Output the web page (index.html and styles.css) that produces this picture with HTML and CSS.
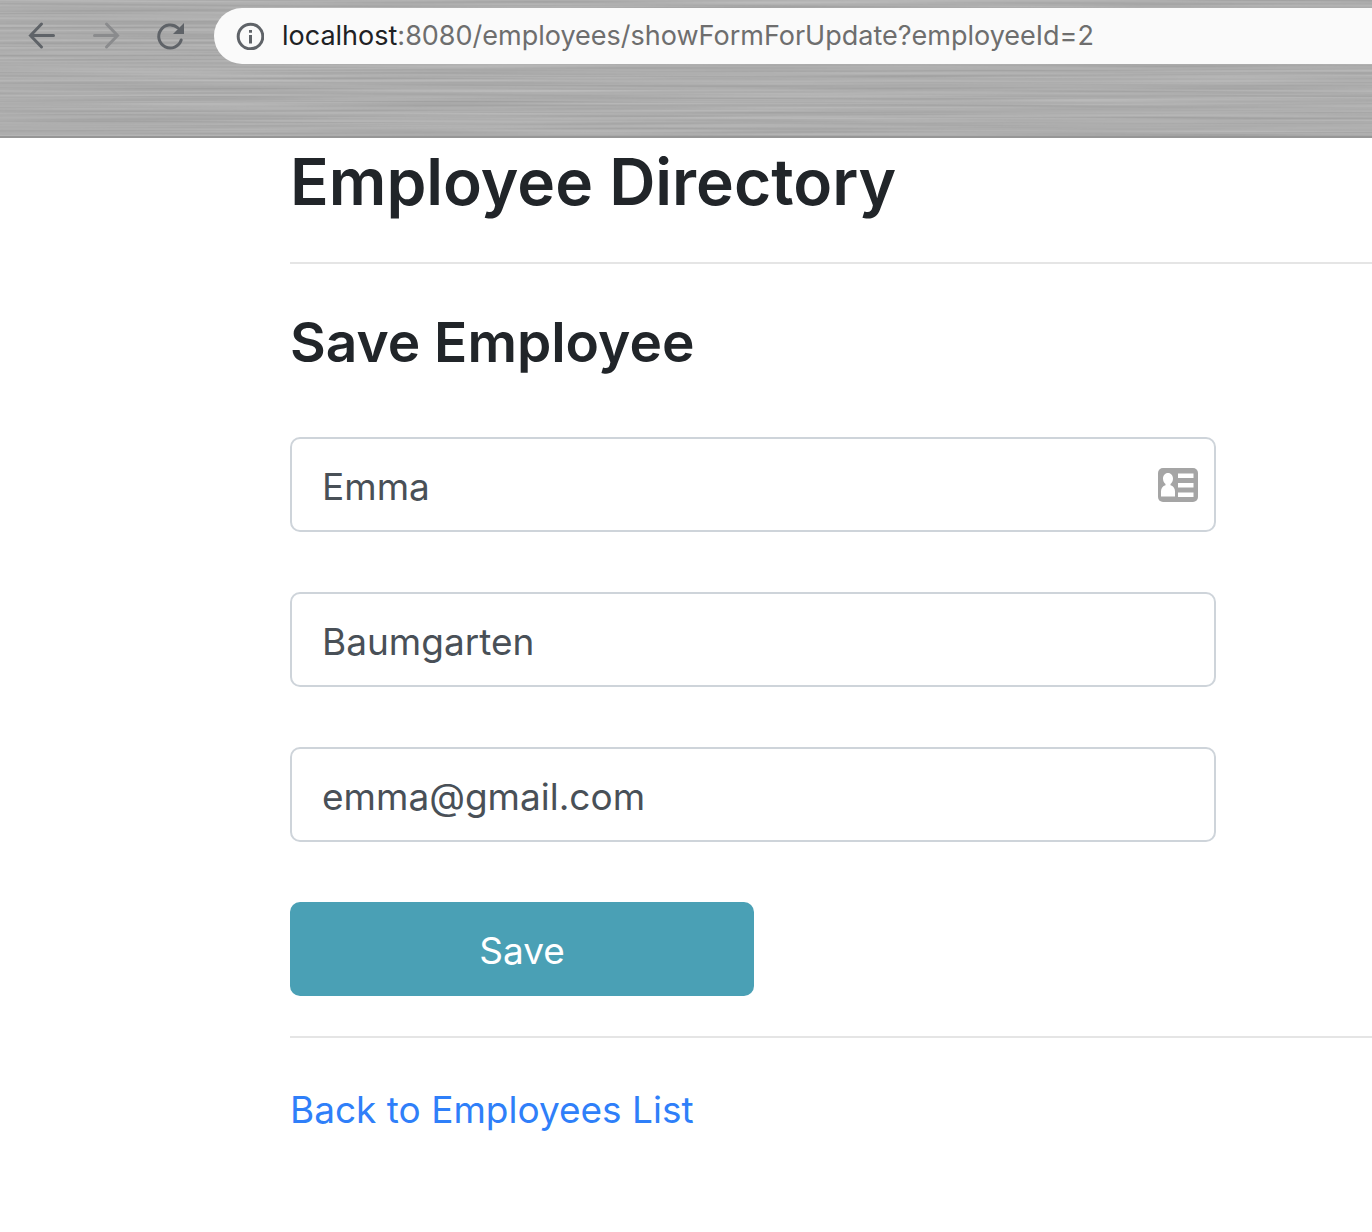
FILE: index.html
```
<!DOCTYPE html>
<html lang="en">
<head>
<meta charset="utf-8">
<title>Save Employee</title>
<meta name="viewport" content="width=device-width, initial-scale=1">
<link rel="stylesheet" href="styles.css">
</head>
<body>
<header class="chrome">
  <svg class="metal" aria-hidden="true">
    <filter id="brushed" x="0" y="0" width="100%" height="100%" color-interpolation-filters="sRGB">
      <feTurbulence type="fractalNoise" baseFrequency="0.003 0.4" numOctaves="2" seed="12"/>
      <feColorMatrix values="0.16 0 0 0 0.6  0.16 0 0 0 0.6  0.16 0 0 0 0.6  0 0 0 0 1"/>
    </filter>
    <rect width="100%" height="100%" filter="url(#brushed)"/>
  </svg>
  <nav class="toolbar" aria-label="Browser">
    <div class="nav-buttons">
      <button class="nav-button" type="button" aria-label="Back">
        <svg width="32" height="32" viewBox="0 0 32 32"><path d="M27.500 15.500H4.500M15.500 4L4.500 15.500l11 11.500"/></svg>
      </button>
      <button class="nav-button nav-button-off" type="button" aria-label="Forward" disabled>
        <svg width="32" height="32" viewBox="0 0 32 32"><path d="M4.500 15.500h23M16.500 4l11 11.500-11 11.500"/></svg>
      </button>
      <button class="nav-button" type="button" aria-label="Reload">
        <svg width="32" height="32" viewBox="0 0 32 32"><path d="M24 8A11.500 11.500 0 1 0 27.200 20"/><path class="solid" d="M30 3v11H19z"/></svg>
      </button>
    </div>
    <div class="address">
      <svg class="info" width="28" height="28" viewBox="0 0 28 28" aria-hidden="true"><circle cx="14.500" cy="14.500" r="12.300"/><path d="M14.500 13v8.500M14.500 8v2.800"/></svg>
      <span class="url"><span class="host">localhost</span>:8080/employees/showFormForUpdate?employeeId=2</span>
    </div>
  </nav>
</header>
<main class="page">
  <h1>Employee Directory</h1>
  <hr>
  <h2>Save Employee</h2>
  <form class="employee-form">
    <div class="field">
      <input type="text" aria-label="First name" value="Emma">
      <svg class="card-icon" width="40" height="36" viewBox="0 0 40 36" aria-hidden="true">
        <rect y="1" width="40" height="34" rx="5" fill="#a5a5a5"/>
        <path fill="#fff" d="M10 6c3 0 5 2.500 5 5.500 0 2.500-1 4.500-2.500 5.500v1.200c2.800.8 4.500 3 4.500 6V29.500H3v-5.300c0-3 1.700-5.200 4.500-6V17C6 16 5 14 5 11.500 5 8.500 7 6 10 6zM20 6.500h15.500V11H20zM20 16h15.500v4.500H20zM20 25.500h15.500V30H20z"/>
      </svg>
    </div>
    <div class="field"><input type="text" aria-label="Last name" value="Baumgarten"></div>
    <div class="field"><input type="text" aria-label="Email" value="emma@gmail.com"></div>
    <button class="save" type="submit">Save</button>
  </form>
  <hr>
  <a class="back" href="#">Back to Employees List</a>
</main>
</body>
</html>
```
FILE: styles.css
```
* {
  box-sizing: border-box;
}

body {
  margin: 0;
  background: #fff;
  color: #212529;
  font-family: Inter, "Liberation Sans", sans-serif;
  font-size: 37px;
  line-height: 60px;
}

.chrome {
  position: relative;
  padding: 8px 0 72px;
  border-bottom: 2px solid #969696;
  background: #acacac;
}

.metal {
  position: absolute;
  inset: 0;
  width: 100%;
  height: 100%;
}

.toolbar {
  position: relative;
  display: flex;
  gap: 28px;
}

.nav-buttons {
  display: flex;
  align-items: center;
  gap: 32px;
  padding-left: 26px;
}

.nav-button {
  display: flex;
  padding: 0;
  border: 0;
  background: none;
}

.nav-button svg {
  fill: none;
  stroke: #5f6368;
  stroke-width: 3;
  stroke-linecap: round;
}

.nav-button .solid {
  fill: #5f6368;
  stroke: none;
}

.nav-button-off svg {
  stroke: #8a8b8d;
}

.address {
  display: flex;
  flex: 1;
  align-items: center;
  gap: 18px;
  height: 56px;
  padding-left: 22px;
  border-radius: 28px 0 0 28px;
  background: #fafafa;
}

.info {
  fill: none;
  stroke: #5f6368;
  stroke-width: 3;
}

.url {
  color: #6e6e6e;
  font-size: 27px;
  line-height: 56px;
  white-space: nowrap;
}

.host {
  color: #202124;
}

.page {
  padding-left: 290px;
}

h1,
h2 {
  margin: 0;
  font-weight: 600;
}

h1 {
  padding-bottom: 36px;
  font-size: 64px;
  line-height: 88px;
}

h2 {
  padding: 40px 0 57px;
  font-size: 55px;
  line-height: 76px;
}

hr {
  height: 2px;
  margin: 0;
  border: 0;
  background: #e5e5e5;
}

.employee-form {
  display: flex;
  flex-direction: column;
  gap: 60px;
  max-width: 926px;
  padding-bottom: 40px;
}

.field {
  position: relative;
}

.field input {
  display: block;
  width: 100%;
  height: 95px;
  padding: 4px 30px 0;
  border: 2px solid #ced4da;
  border-radius: 10px;
  background: #fff;
  color: #495057;
  font: inherit;
}

.card-icon {
  position: absolute;
  top: 30px;
  right: 18px;
}

.save {
  width: 464px;
  height: 94px;
  padding: 4px 0 0;
  border: 0;
  border-radius: 10px;
  background: #4aa0b5;
  color: #fff;
  font: inherit;
}

.back {
  display: inline-block;
  margin: 42px 0;
  color: #2f7ff9;
  text-decoration: none;
}
```
